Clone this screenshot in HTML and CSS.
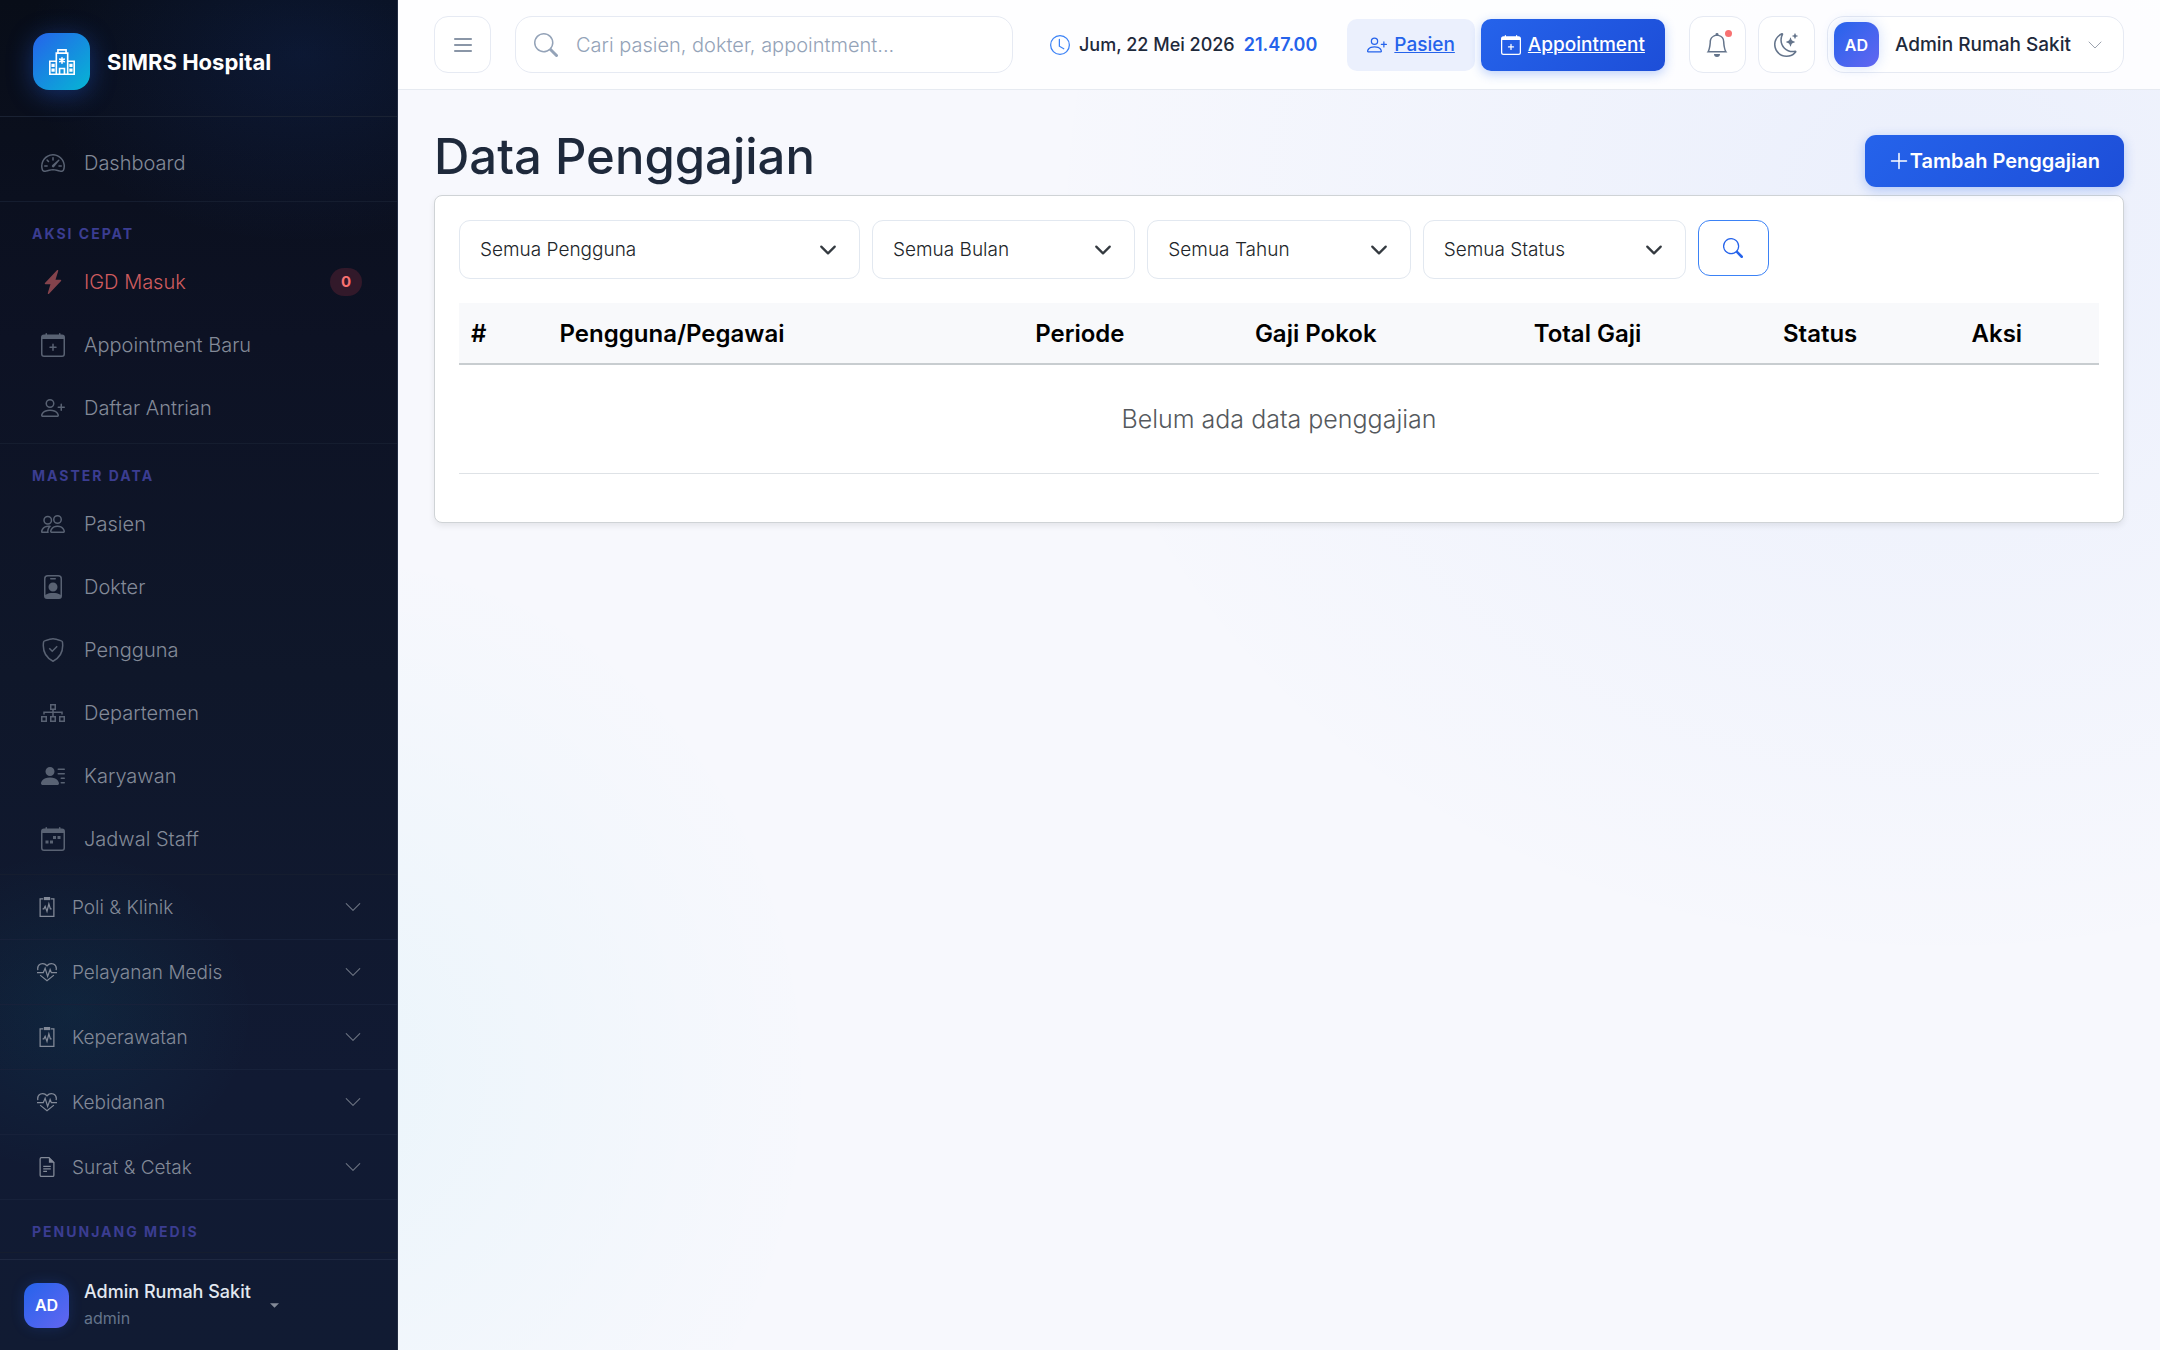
FILE: index.html
```html
<!DOCTYPE html>
<html lang="id">
<head>
    <meta charset="UTF-8">
    <meta name="viewport" content="width=device-width, initial-scale=1.0">
    <title>Data Penggajian - SIMRS Hospital</title>
    <link rel="stylesheet" href="styles.css">
</head>
<body>

<!-- Kumpulan ikon -->
<svg class="sprite" aria-hidden="true">
    <symbol id="i-hospital" viewBox="0 0 16 16"><path fill="none" stroke="currentColor" d="M4.500 15.500V2.500h7v13M4.500 7.500h-4v8h15v-8h-4M5.500 2.500v-2h5v2M6.500 15.500v-3.500h3v3.500M2 9.500h1v1H2zM2 12.500h1v1H2zM13 9.500h1v1h-1zM13 12.500h1v1h-1z"/><path stroke="currentColor" d="M8 5v4M6.300 6l3.400 2M9.700 6L6.300 8"/></symbol>
    <symbol id="i-speed" viewBox="0 0 16 16"><path d="M8 4a.5.5 0 0 1 .5.5V6a.5.5 0 0 1-1 0V4.500A.5.5 0 0 1 8 4zM3.732 5.732a.5.5 0 0 1 .707 0l.915.914a.5.5 0 1 1-.708.708l-.914-.915a.5.5 0 0 1 0-.707zM2 10a.5.5 0 0 1 .5-.5h1.586a.5.5 0 0 1 0 1H2.500A.5.5 0 0 1 2 10zm9.500 0a.5.5 0 0 1 .5-.5h1.500a.5.5 0 0 1 0 1H12a.5.5 0 0 1-.5-.5zm.754-4.246a.389.389 0 0 0-.527-.02L7.547 9.310a.91.91 0 1 0 1.302 1.258l3.434-4.297a.389.389 0 0 0-.029-.518z"/><path fill-rule="evenodd" d="M0 10a8 8 0 1 1 15.547 2.661c-.442 1.253-1.845 1.602-2.932 1.250C11.309 13.488 9.475 13 8 13c-1.474 0-3.310.488-4.615.911-1.087.352-2.490.003-2.932-1.250A7.988 7.988 0 0 1 0 10zm8-7a7 7 0 0 0-6.603 9.329c.203.575.923.876 1.680.630C4.397 12.533 6.358 12 8 12s3.604.532 4.923.960c.757.245 1.477-.056 1.680-.631A7 7 0 0 0 8 3z"/></symbol>
    <symbol id="i-bolt" viewBox="0 0 16 16"><path d="M11.251.068a.5.5 0 0 1 .227.58L9.677 6.500H13a.5.5 0 0 1 .364.843l-8 8.500a.5.5 0 0 1-.842-.49L6.323 9.500H3a.5.5 0 0 1-.364-.843l8-8.500a.5.5 0 0 1 .615-.09z"/></symbol>
    <symbol id="i-cal-plus" viewBox="0 0 16 16"><path d="M8 7a.5.5 0 0 1 .5.5V9H10a.5.5 0 0 1 0 1H8.500v1.500a.5.5 0 0 1-1 0V10H6a.5.5 0 0 1 0-1h1.500V7.500A.5.5 0 0 1 8 7z"/><path d="M3.500 0a.5.5 0 0 1 .5.5V1h8V.5a.5.5 0 0 1 1 0V1h1a2 2 0 0 1 2 2v11a2 2 0 0 1-2 2H2a2 2 0 0 1-2-2V3a2 2 0 0 1 2-2h1V.5a.5.5 0 0 1 .5-.5zM1 4v10a1 1 0 0 0 1 1h12a1 1 0 0 0 1-1V4H1z"/></symbol>
    <symbol id="i-cal-week" viewBox="0 0 16 16"><path d="M11 6h2v2h-2zM8 6h2v2H8zM3 9h2v2H3zM6 9h2v2H6z"/><path d="M3.500 0a.5.5 0 0 1 .5.5V1h8V.5a.5.5 0 0 1 1 0V1h1a2 2 0 0 1 2 2v11a2 2 0 0 1-2 2H2a2 2 0 0 1-2-2V3a2 2 0 0 1 2-2h1V.5a.5.5 0 0 1 .5-.5zM1 4v10a1 1 0 0 0 1 1h12a1 1 0 0 0 1-1V4H1z"/></symbol>
    <symbol id="i-person-plus" viewBox="0 0 16 16"><path d="M6 8a3 3 0 1 0 0-6 3 3 0 0 0 0 6zm2-3a2 2 0 1 1-4 0 2 2 0 0 1 4 0zm4 8c0 1-1 1-1 1H1s-1 0-1-1 1-4 6-4 6 3 6 4zm-1-.004c-.001-.246-.154-.986-.832-1.664C9.516 10.680 8.289 10 6 10c-2.290 0-3.516.680-4.168 1.332-.678.678-.830 1.418-.832 1.664h10z"/><path d="M13.500 5a.5.5 0 0 1 .5.5V7h1.500a.5.5 0 0 1 0 1H14v1.500a.5.5 0 0 1-1 0V8h-1.500a.5.5 0 0 1 0-1H13V5.500a.5.5 0 0 1 .5-.5z"/></symbol>
    <symbol id="i-people" viewBox="0 0 16 16"><path d="M15 14s1 0 1-1-1-4-5-4-5 3-5 4 1 1 1 1h8zm-7.978-1A.261.261 0 0 1 7 12.996c.001-.264.167-1.030.760-1.720C8.312 10.629 9.282 10 11 10c1.717 0 2.687.630 3.240 1.276.593.690.758 1.457.760 1.720l-.008.002a.274.274 0 0 1-.014.002H7.022zM11 7a2 2 0 1 0 0-4 2 2 0 0 0 0 4zm3-2a3 3 0 1 1-6 0 3 3 0 0 1 6 0zM6.936 9.280a5.880 5.880 0 0 0-1.230-.247A7.350 7.350 0 0 0 5 9c-4 0-5 3-5 4 0 .667.333 1 1 1h4.216A2.238 2.238 0 0 1 5 13c0-1.010.377-2.042 1.090-2.904.243-.294.526-.569.846-.816zM4.920 10A5.493 5.493 0 0 0 4 13H1c0-.260.164-1.030.760-1.724.545-.636 1.492-1.256 3.160-1.275zM1.500 5.500a3 3 0 1 1 6 0 3 3 0 0 1-6 0zm3-2a2 2 0 1 0 0 4 2 2 0 0 0 0-4z"/></symbol>
    <symbol id="i-badge" viewBox="0 0 16 16"><path d="M6.500 2a.5.5 0 0 0 0 1h3a.5.5 0 0 0 0-1h-3zM11 8a3 3 0 1 1-6 0 3 3 0 0 1 6 0z"/><path d="M4.500 0A2.500 2.500 0 0 0 2 2.500V14a2 2 0 0 0 2 2h8a2 2 0 0 0 2-2V2.500A2.500 2.500 0 0 0 11.500 0h-7zM3 2.500A1.500 1.500 0 0 1 4.500 1h7A1.500 1.500 0 0 1 13 2.500v10.795a4.200 4.200 0 0 0-.776-.492C11.392 12.387 10.063 12 8 12s-3.392.387-4.224.803a4.200 4.200 0 0 0-.776.492V2.500z"/></symbol>
    <symbol id="i-shield" viewBox="0 0 16 16"><path fill="none" stroke="currentColor" d="M8 .5c-1 0-3.500.7-5.600 1.400a1 1 0 0 0-.7.800C.9 8.500 3.200 13 8 15.500c4.800-2.500 7.100-7 6.300-12.800a1 1 0 0 0-.7-.8C11.500 1.200 9 .5 8 .5zM5.500 6.800l2 2 3.300-3.300"/></symbol>
    <symbol id="i-diagram" viewBox="0 0 16 16"><path fill="none" stroke="currentColor" d="M6.500 2.500h3v3h-3zM.5 10.500h3v3h-3zM6.500 10.500h3v3h-3zM12.500 10.500h3v3h-3zM8 5.500v5M2 9V7.500h12V9"/></symbol>
    <symbol id="i-person-lines" viewBox="0 0 16 16"><path d="M6 8a3 3 0 1 0 0-6 3 3 0 0 0 0 6zm-5 6s-1 0-1-1 1-4 6-4 6 3 6 4-1 1-1 1H1zM11 3.500a.5.5 0 0 1 .5-.5h4a.5.5 0 0 1 0 1h-4a.5.5 0 0 1-.5-.5zm.5 2.500a.5.5 0 0 0 0 1h4a.5.5 0 0 0 0-1h-4zm2 3a.5.5 0 0 0 0 1h2a.5.5 0 0 0 0-1h-2zm0 3a.5.5 0 0 0 0 1h2a.5.5 0 0 0 0-1h-2z"/></symbol>
    <symbol id="i-clipboard" viewBox="0 0 16 16"><path fill="none" stroke="currentColor" d="M5 1.500H2.500v14h11v-14H11M4.500 9.500h1l1-2 1.500 4 1.500-6 1.200 4h1"/><path d="M5.500 0h5v2.500h-5z"/></symbol>
    <symbol id="i-heart" viewBox="0 0 16 16"><path fill="none" stroke="currentColor" d="M.7 6.500C-.3 1.500 5-.3 8 3c3-3.300 8.300-1.500 7.300 3.500M2.500 10.500L8 15l5.500-4.500M0 8.500h5l1.500-3.500 2 6.500L10.500 6l1 2.500H16"/></symbol>
    <symbol id="i-file" viewBox="0 0 16 16"><path fill="none" stroke="currentColor" d="M3.500.5h6l4 4v10a1 1 0 0 1-1 1h-9a1 1 0 0 1-1-1v-13a1 1 0 0 1 1-1zM5 7.500h6M5 9.500h6M5 11.500h3"/><path d="M9.500 0v4.500H14z"/></symbol>
    <symbol id="i-chevron" viewBox="0 0 16 16"><path fill="none" stroke="currentColor" stroke-linecap="round" stroke-linejoin="round" d="M2 5l6 6 6-6"/></symbol>
    <symbol id="i-menu" viewBox="0 0 16 16"><path fill="none" stroke="currentColor" stroke-linecap="round" d="M2.500 4h11M2.500 8h11M2.500 12h11"/></symbol>
    <symbol id="i-search" viewBox="0 0 16 16"><path d="M11.742 10.344a6.500 6.500 0 1 0-1.397 1.398h-.001c.03.04.062.078.098.115l3.850 3.850a1 1 0 0 0 1.415-1.414l-3.850-3.850a1.007 1.007 0 0 0-.115-.1zM12 6.500a5.500 5.500 0 1 1-11 0 5.500 5.500 0 0 1 11 0z"/></symbol>
    <symbol id="i-clock" viewBox="0 0 16 16"><g fill="none" stroke="currentColor" stroke-linecap="round"><circle cx="8" cy="8" r="7.500"/><path d="M7.500 3.500V9l3.500 2"/></g></symbol>
    <symbol id="i-bell" viewBox="0 0 16 16"><path d="M8 16a2 2 0 0 0 2-2H6a2 2 0 0 0 2 2zM8 1.918l-.797.161A4.002 4.002 0 0 0 4 6c0 .628-.134 2.197-.459 3.742-.160.767-.376 1.566-.663 2.258h10.244c-.287-.692-.502-1.490-.663-2.258C12.134 8.197 12 6.628 12 6a4.002 4.002 0 0 0-3.203-3.920L8 1.917zM14.220 12c.223.447.481.801.780 1H1c.299-.199.557-.553.780-1C2.680 10.200 3 6.880 3 6c0-2.420 1.720-4.440 4.005-4.901a1 1 0 1 1 1.990 0A5.002 5.002 0 0 1 13 6c0 .880.320 4.200 1.220 6z"/></symbol>
    <symbol id="i-moon" viewBox="0 0 16 16"><path d="M6 .278a.768.768 0 0 1 .08.858 7.208 7.208 0 0 0-.878 3.460c0 4.021 3.278 7.277 7.318 7.277.527 0 1.040-.055 1.533-.160a.787.787 0 0 1 .810.316.733.733 0 0 1-.031.893A8.349 8.349 0 0 1 8.344 16C3.734 16 0 12.286 0 7.710 0 4.266 2.114 1.312 5.124.060A.752.752 0 0 1 6 .278zM4.858 1.311A7.269 7.269 0 0 0 1.025 7.710c0 4.020 3.279 7.276 7.319 7.276a7.316 7.316 0 0 0 5.205-2.162c-.337.042-.680.063-1.029.063-4.610 0-8.343-3.714-8.343-8.290 0-1.167.242-2.278.681-3.286z"/><path d="M10.794 3.148a.217.217 0 0 1 .412 0l.387 1.162c.173.518.579.924 1.097 1.097l1.162.387a.217.217 0 0 1 0 .412l-1.162.387a1.734 1.734 0 0 0-1.097 1.097l-.387 1.162a.217.217 0 0 1-.412 0l-.387-1.162A1.734 1.734 0 0 0 9.310 6.593l-1.162-.387a.217.217 0 0 1 0-.412l1.162-.387a1.734 1.734 0 0 0 1.097-1.097l.387-1.162zM13.863.099a.145.145 0 0 1 .274 0l.258.774c.115.346.386.617.732.732l.774.258a.145.145 0 0 1 0 .274l-.774.258a1.156 1.156 0 0 0-.732.732l-.258.774a.145.145 0 0 1-.274 0l-.258-.774a1.156 1.156 0 0 0-.732-.732l-.774-.258a.145.145 0 0 1 0-.274l.774-.258c.346-.115.617-.386.732-.732L13.863.1z"/></symbol>
    <symbol id="i-plus" viewBox="0 0 16 16"><path fill="none" stroke="currentColor" stroke-width="1.200" stroke-linecap="round" d="M8 2v12M2 8h12"/></symbol>
    <symbol id="i-caret" viewBox="0 0 16 16"><path d="M0 4h16l-8 8z"/></symbol>
</svg>

<aside class="sidebar">
    <div class="brand">
        <span class="brand-icon"><svg class="icon-lg"><use href="#i-hospital"/></svg></span>
        <span class="brand-name">SIMRS Hospital</span>
    </div>

    <nav class="menu">
        <div class="menu-section menu-top">
            <a href="#" class="menu-item"><svg class="icon-md"><use href="#i-speed"/></svg>Dashboard</a>
        </div>
        <div class="menu-section">
            <div class="menu-label">AKSI CEPAT</div>
            <a href="#" class="menu-item danger"><svg class="icon-md"><use href="#i-bolt"/></svg>IGD Masuk<span class="badge">0</span></a>
            <a href="#" class="menu-item"><svg class="icon-md"><use href="#i-cal-plus"/></svg>Appointment Baru</a>
            <a href="#" class="menu-item"><svg class="icon-md"><use href="#i-person-plus"/></svg>Daftar Antrian</a>
        </div>
        <div class="menu-section">
            <div class="menu-label">MASTER DATA</div>
            <a href="#" class="menu-item"><svg class="icon-md"><use href="#i-people"/></svg>Pasien</a>
            <a href="#" class="menu-item"><svg class="icon-md"><use href="#i-badge"/></svg>Dokter</a>
            <a href="#" class="menu-item"><svg class="icon-md"><use href="#i-shield"/></svg>Pengguna</a>
            <a href="#" class="menu-item"><svg class="icon-md"><use href="#i-diagram"/></svg>Departemen</a>
            <a href="#" class="menu-item"><svg class="icon-md"><use href="#i-person-lines"/></svg>Karyawan</a>
            <a href="#" class="menu-item"><svg class="icon-md"><use href="#i-cal-week"/></svg>Jadwal Staff</a>
        </div>
        <button type="button" class="menu-group"><svg class="icon"><use href="#i-clipboard"/></svg>Poli &amp; Klinik<svg class="chevron"><use href="#i-chevron"/></svg></button>
        <button type="button" class="menu-group"><svg class="icon"><use href="#i-heart"/></svg>Pelayanan Medis<svg class="chevron"><use href="#i-chevron"/></svg></button>
        <button type="button" class="menu-group"><svg class="icon"><use href="#i-clipboard"/></svg>Keperawatan<svg class="chevron"><use href="#i-chevron"/></svg></button>
        <button type="button" class="menu-group"><svg class="icon"><use href="#i-heart"/></svg>Kebidanan<svg class="chevron"><use href="#i-chevron"/></svg></button>
        <button type="button" class="menu-group"><svg class="icon"><use href="#i-file"/></svg>Surat &amp; Cetak<svg class="chevron"><use href="#i-chevron"/></svg></button>
        <div class="menu-section">
            <div class="menu-label">PENUNJANG MEDIS</div>
        </div>
    </nav>

    <button type="button" class="sidebar-user">
        <span class="avatar">AD</span>
        <span class="sidebar-user-text">
            <span class="sidebar-user-name">Admin Rumah Sakit</span>
            <span class="sidebar-user-role">admin</span>
        </span>
        <svg class="caret"><use href="#i-caret"/></svg>
    </button>
</aside>

<div class="main">
    <header class="topbar">
        <button type="button" class="square-btn" aria-label="Menu"><svg class="icon-md"><use href="#i-menu"/></svg></button>
        <label class="search">
            <svg class="icon-md"><use href="#i-search"/></svg>
            <input type="search" placeholder="Cari pasien, dokter, appointment..." aria-label="Cari">
        </label>
        <div class="clock">
            <svg class="icon"><use href="#i-clock"/></svg>
            <span>Jum, 22 Mei 2026</span>
            <span class="clock-time">21.47.00</span>
        </div>
        <div class="quick">
            <a href="#" class="quick-btn"><svg class="icon"><use href="#i-person-plus"/></svg><span>Pasien</span></a>
            <a href="#" class="quick-btn primary"><svg class="icon"><use href="#i-cal-plus"/></svg><span>Appointment</span></a>
        </div>
        <div class="topbar-right">
            <button type="button" class="square-btn" aria-label="Notifikasi"><svg class="icon-md"><use href="#i-bell"/></svg><span class="dot"></span></button>
            <button type="button" class="square-btn" aria-label="Mode gelap"><svg class="icon-md"><use href="#i-moon"/></svg></button>
            <button type="button" class="user-btn"><span class="avatar">AD</span><span>Admin Rumah Sakit</span><svg class="chevron"><use href="#i-chevron"/></svg></button>
        </div>
    </header>

    <main class="content">
        <div class="page-head">
            <h1>Data Penggajian</h1>
            <a href="#" class="btn-add"><svg class="icon"><use href="#i-plus"/></svg>Tambah Penggajian</a>
        </div>

        <div class="card">
            <form class="filters">
                <select class="wide" aria-label="Pengguna"><option>Semua Pengguna</option></select>
                <select aria-label="Bulan"><option>Semua Bulan</option></select>
                <select aria-label="Tahun"><option>Semua Tahun</option></select>
                <select aria-label="Status"><option>Semua Status</option></select>
                <button type="button" class="btn-search" aria-label="Cari"><svg class="icon"><use href="#i-search"/></svg></button>
            </form>

            <table>
                <thead>
                    <tr>
                        <th class="col-no">#</th>
                        <th class="col-user">Pengguna/Pegawai</th>
                        <th class="col-period">Periode</th>
                        <th class="col-base">Gaji Pokok</th>
                        <th class="col-total">Total Gaji</th>
                        <th class="col-status">Status</th>
                        <th>Aksi</th>
                    </tr>
                </thead>
                <tbody>
                    <tr>
                        <td colspan="7" class="empty">Belum ada data penggajian</td>
                    </tr>
                </tbody>
            </table>
        </div>
    </main>
</div>

</body>
</html>
```
FILE: styles.css
```css
* {
    box-sizing: border-box;
}
body {
    margin: 0;
    display: flex;
    height: 100vh;
    font-family: Inter, "Noto Sans", sans-serif;
    font-size: 20px;
    color: #1e293b;
    background:
        radial-gradient(ellipse 42% 57% at 90% 15%, rgba(37, 99, 235, 0.06), transparent),
        radial-gradient(ellipse 23% 40% at 15% 80%, rgba(6, 182, 212, 0.05), transparent),
        #f7f8fd;
}
button, input, select {
    font: inherit;
    color: inherit;
}
button {
    cursor: pointer;
}
svg {
    fill: currentColor;
    flex-shrink: 0;
}
.sprite {
    display: none;
}
.icon {
    width: 20px;
    height: 20px;
}
.icon-md {
    width: 24px;
    height: 24px;
}
.icon-lg {
    width: 26px;
    height: 26px;
}
.chevron {
    width: 18px;
    height: 18px;
    margin-left: auto;
    color: #6b7280;
}
.avatar {
    display: flex;
    align-items: center;
    justify-content: center;
    width: 45px;
    height: 45px;
    flex-shrink: 0;
    border-radius: 13px;
    background: linear-gradient(135deg, #2563eb, #6366f1);
    box-shadow: 0 0 14px rgba(37, 99, 235, 0.2);
    color: #fff;
    font-size: 16px;
    font-weight: 600;
}

/* Sidebar */
.sidebar {
    display: flex;
    flex-direction: column;
    width: 398px;
    flex-shrink: 0;
    border-right: 1px solid #232d43;
    background:
        radial-gradient(ellipse 70% 14% at 76% 4%, rgba(37, 99, 235, 0.12), transparent),
        radial-gradient(ellipse 46% 12% at 18% 75%, rgba(6, 182, 212, 0.07), transparent),
        linear-gradient(180deg, #080d18, #0d1224 25%, #0f172a 50%, #111a33 80%, #111b33);
    color: #838a98;
}
.brand {
    display: flex;
    align-items: center;
    gap: 17px;
    padding: 33px 33px 26px;
    border-bottom: 1px solid #1a2233;
}
.brand-icon {
    display: flex;
    align-items: center;
    justify-content: center;
    width: 57px;
    height: 57px;
    border-radius: 16px;
    background: linear-gradient(135deg, #2563eb, #06b6d4);
    box-shadow: 0 4px 26px rgba(37, 99, 235, 0.4);
    color: #fff;
}
.brand-name {
    color: #fff;
    font-size: 22px;
    font-weight: 700;
}
.menu {
    flex: 1;
    min-height: 0;
    overflow: hidden;
}
.menu-section {
    padding: 20px 0 4px;
    border-bottom: 1px solid #151d2f;
}
.menu-top {
    padding: 14px 0 7px;
}
.menu-label {
    padding: 0 32px;
    margin-bottom: 4px;
    line-height: 24px;
    font-size: 14px;
    font-weight: 700;
    letter-spacing: 2px;
    color: #3b3d91;
}
.menu-item {
    display: flex;
    align-items: center;
    gap: 19px;
    height: 63px;
    padding: 0 35px 0 41px;
    color: #838a98;
    font-weight: 300;
    text-decoration: none;
}
.menu-item svg {
    color: #596273;
}
.menu-item.danger {
    color: #cf5c5f;
}
.menu-item.danger svg {
    color: #84434c;
}
.badge {
    margin-left: auto;
    padding: 0 11px;
    line-height: 28px;
    border-radius: 14px;
    background: #32192a;
    color: #f87171;
    font-size: 15px;
    font-weight: 700;
}
.menu-group {
    display: flex;
    align-items: center;
    gap: 15px;
    width: 100%;
    height: 65px;
    padding: 0 35px 0 37px;
    border: 0;
    border-bottom: 1px solid #17213a;
    background: none;
    font-size: 19px;
    font-weight: 300;
}
.sidebar-user {
    display: flex;
    align-items: center;
    gap: 15px;
    padding: 19px 24px;
    border: 0;
    border-top: 1px solid #1e2841;
    background: none;
    text-align: left;
}
.sidebar-user-text {
    display: flex;
    flex-direction: column;
    line-height: 26px;
}
.sidebar-user-name {
    color: #e2e8f0;
    font-size: 18px;
    font-weight: 500;
}
.sidebar-user-role {
    color: #64748b;
    font-size: 16px;
}
.caret {
    width: 9px;
    height: 9px;
    margin-left: 4px;
}

/* Topbar */
.main {
    flex: 1;
    min-width: 0;
}
.topbar {
    display: flex;
    align-items: center;
    height: 90px;
    padding: 0 36px;
    border-bottom: 1px solid #e6eaf1;
    background: rgba(255, 255, 255, 0.85);
    font-size: 19px;
    font-weight: 500;
}
.square-btn {
    position: relative;
    display: flex;
    align-items: center;
    justify-content: center;
    width: 57px;
    height: 57px;
    padding: 0;
    border: 1px solid #e6eaf3;
    border-radius: 14px;
    background: #fff;
    color: #64748b;
}
.dot {
    position: absolute;
    top: 13px;
    right: 13px;
    width: 7px;
    height: 7px;
    border-radius: 50%;
    background: #f87171;
}
.search {
    display: flex;
    align-items: center;
    gap: 18px;
    flex: 0 1 498px;
    min-width: 0;
    height: 57px;
    margin-left: 24px;
    padding: 0 18px;
    border: 1px solid #e6eaf3;
    border-radius: 17px;
    background: #fff;
    color: #94a3b8;
    font-size: 20px;
    font-weight: 300;
}
.search input {
    flex: 1;
    min-width: 0;
    padding: 0;
    border: 0;
    outline: 0;
    background: none;
}
.search input::placeholder {
    color: #94a3b8;
}
.clock {
    display: flex;
    align-items: center;
    gap: 9px;
    margin-left: 37px;
    font-size: 18px;
    white-space: nowrap;
}
.clock svg {
    color: #3b82f6;
}
.clock-time {
    color: #2563eb;
    font-weight: 600;
}
.quick {
    display: flex;
    gap: 6px;
    margin-left: auto;
}
.quick-btn {
    display: flex;
    align-items: center;
    gap: 7px;
    height: 52px;
    padding: 0 20px;
    border-radius: 10px;
    background: #ebf0fd;
    color: #2563eb;
}
.quick-btn.primary {
    background: linear-gradient(135deg, #2563eb, #1d4ed8);
    box-shadow: 0 3px 11px rgba(37, 99, 235, 0.3);
    color: #fff;
}
.topbar-right {
    display: flex;
    gap: 12px;
    margin-left: 24px;
}
.user-btn {
    display: flex;
    align-items: center;
    gap: 16px;
    height: 57px;
    padding: 0 20px 0 6px;
    border: 1px solid #e6eaf3;
    border-radius: 17px;
    background: #fff;
    white-space: nowrap;
}
.user-btn .chevron {
    width: 16px;
    height: 16px;
    color: #9ca3af;
}

/* Konten */
.content {
    padding: 37px 36px;
}
.page-head {
    display: flex;
    align-items: flex-end;
    justify-content: space-between;
    padding-bottom: 8px;
}
h1 {
    margin: 0;
    line-height: 60px;
    font-size: 49px;
    font-weight: 500;
}
.btn-add {
    display: flex;
    align-items: center;
    gap: 1px;
    height: 52px;
    padding: 0 24px;
    border-radius: 11px;
    background: linear-gradient(135deg, #2563eb, #1d4ed8);
    box-shadow: 0 3px 12px rgba(37, 99, 235, 0.3);
    color: #fff;
    font-weight: 600;
    text-decoration: none;
}
.card {
    padding: 24px 24px 48px;
    border: 1px solid #cfd3d6;
    border-radius: 8px;
    background: #fff;
    box-shadow: 0 3px 6px rgba(0, 0, 0, 0.08);
}
.filters {
    display: grid;
    grid-template-columns: repeat(12, 1fr);
    align-items: start;
    gap: 12px;
    margin-bottom: 24px;
}
.filters select {
    grid-column: span 2;
    height: 59px;
    padding: 0 20px;
    border: 1px solid #e2e8f0;
    border-radius: 11px;
    appearance: none;
    background: #fff url("data:image/svg+xml,%3Csvg xmlns='http://www.w3.org/2000/svg' viewBox='0 0 16 16'%3E%3Cpath fill='none' stroke='%23343a40' stroke-linecap='round' stroke-linejoin='round' stroke-width='2' d='m2 5 6 6 6-6'/%3E%3C/svg%3E") no-repeat right 21px center / 20px 18px;
    color: #212529;
    font-size: 19px;
    font-weight: 300;
}
.filters .wide {
    grid-column: span 3;
}
.btn-search {
    display: flex;
    align-items: center;
    justify-content: center;
    width: 71px;
    height: 56px;
    border: 1px solid #3b82f6;
    border-radius: 12px;
    background: #fff;
    color: #2563eb;
}
table {
    width: 100%;
    table-layout: fixed;
    border-collapse: collapse;
    font-size: 24px;
}
th {
    height: 61px;
    padding: 0 12px;
    border-bottom: 2px solid #c8cdd0;
    background: #f8f9fb;
    color: #000;
    font-weight: 600;
    text-align: left;
}
.col-no {
    width: 5.400%;
}
.col-user {
    width: 29%;
}
.col-period {
    width: 13.400%;
}
.col-base {
    width: 17%;
}
.col-total {
    width: 15.200%;
}
.col-status {
    width: 11.500%;
}
.empty {
    height: 109px;
    padding: 0 12px;
    border-bottom: 1px solid #dee2e6;
    color: #55595d;
    font-size: 25px;
    font-weight: 300;
    text-align: center;
}
```
